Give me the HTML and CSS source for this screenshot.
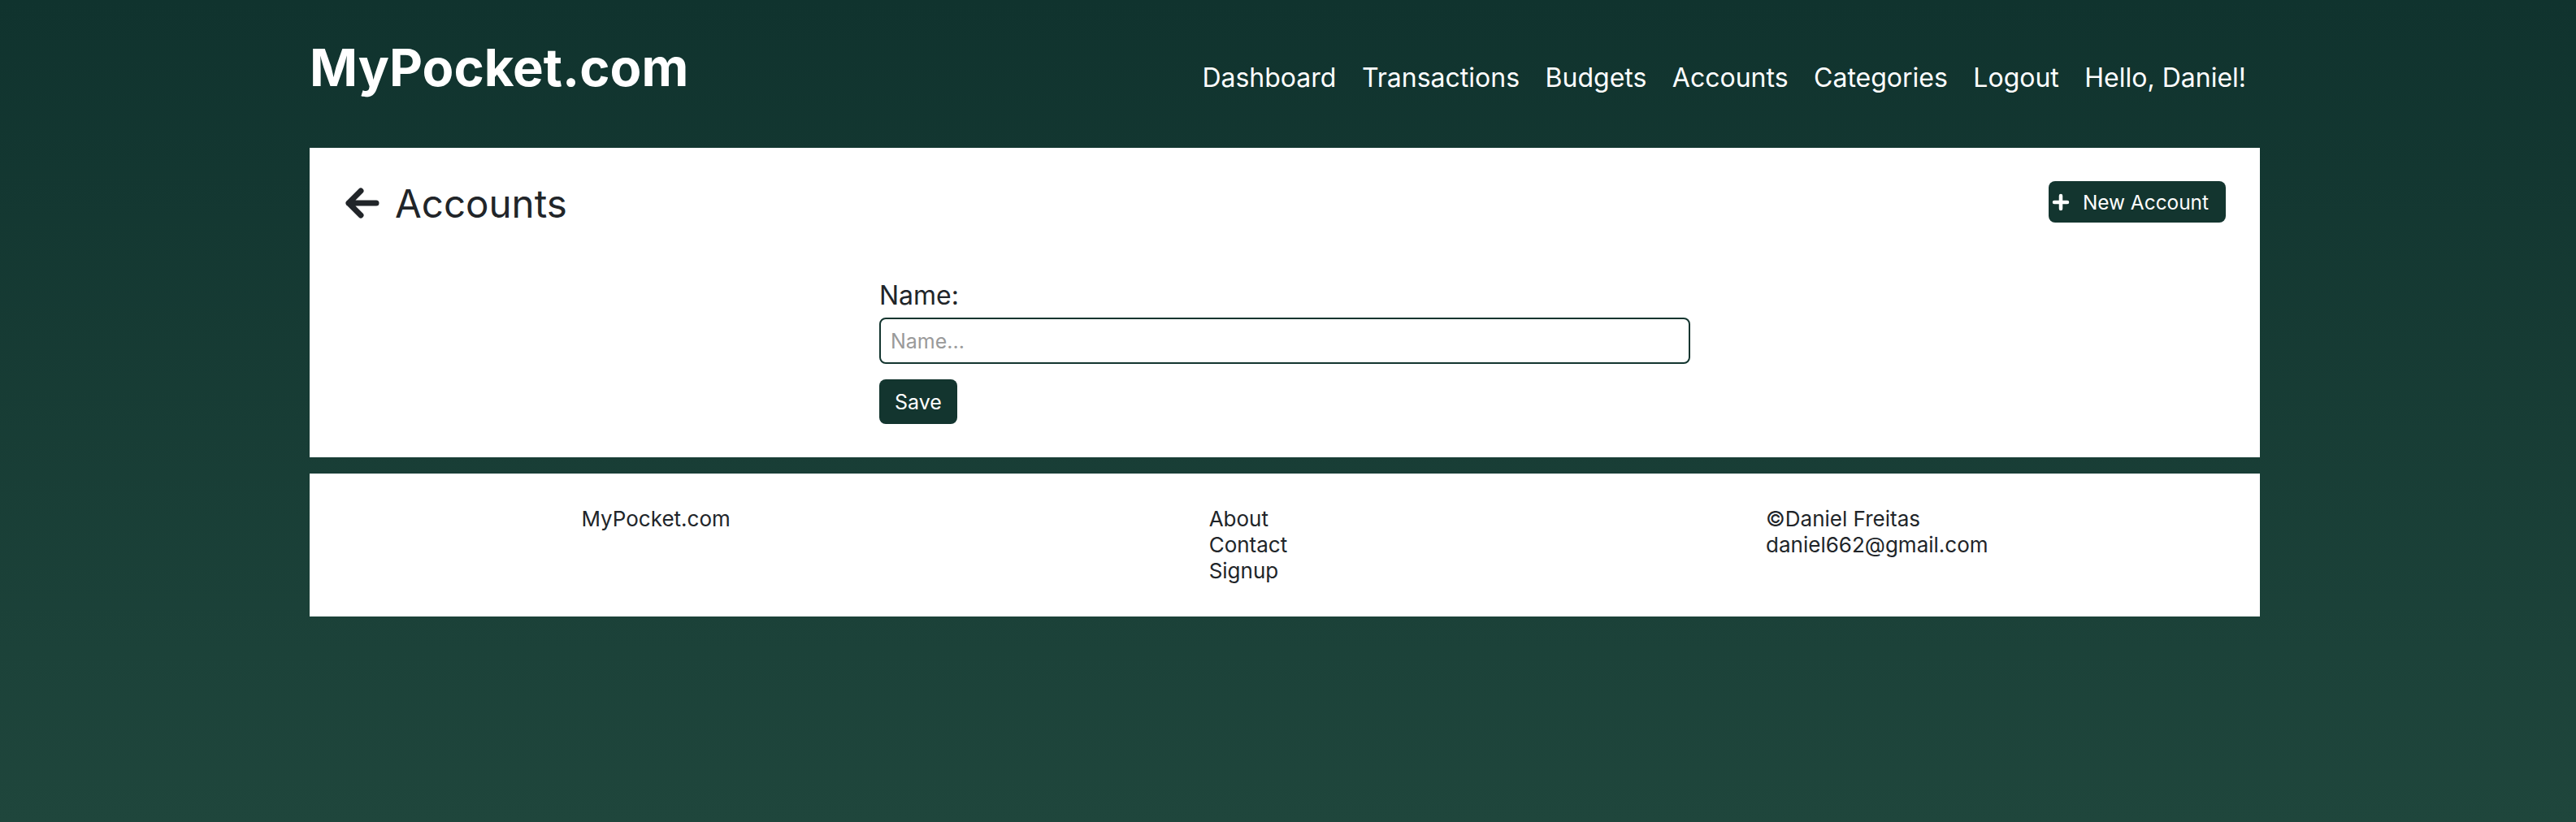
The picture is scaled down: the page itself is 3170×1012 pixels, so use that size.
FILE: index.html
```html
<!DOCTYPE html>
<html lang="en">
<head>
<meta charset="utf-8">
<title>MyPocket.com - Accounts</title>
<link rel="stylesheet" href="styles.css">
</head>
<body>
<div class="wrap">
  <header class="topbar">
    <div class="brand">MyPocket.com</div>
    <nav class="nav">
      <a href="#">Dashboard</a>
      <a href="#">Transactions</a>
      <a href="#">Budgets</a>
      <a href="#">Accounts</a>
      <a href="#">Categories</a>
      <a href="#">Logout</a>
      <span>Hello, Daniel!</span>
    </nav>
  </header>

  <main class="card">
    <div class="card-head">
      <h1 class="title">
        <svg class="back" width="42" height="40" viewBox="0 0 42 40" aria-hidden="true">
          <path d="M19 5 L4 20 L19 35 M4 20 H38" fill="none" stroke="#212529" stroke-width="7" stroke-linecap="round" stroke-linejoin="round"/>
        </svg>
        <span>Accounts</span>
      </h1>
      <button class="btn btn-new">
        <svg class="plus" width="22" height="22" viewBox="0 0 22 22" aria-hidden="true">
          <path d="M11 3 V19 M3 11 H19" fill="none" stroke="#fff" stroke-width="4.5" stroke-linecap="round"/>
        </svg>
        <span>New Account</span>
      </button>
    </div>
    <form class="form">
      <label class="label" for="name">Name:</label>
      <input class="input" id="name" type="text" placeholder="Name...">
      <button class="btn btn-save" type="button">Save</button>
    </form>
  </main>

  <footer class="footer">
    <div class="fcol">MyPocket.com</div>
    <div class="fcol">
      <a href="#">About</a>
      <a href="#">Contact</a>
      <a href="#">Signup</a>
    </div>
    <div class="fcol">
      <span>©Daniel Freitas</span>
      <span>daniel662@gmail.com</span>
    </div>
  </footer>
</div>
</body>
</html>
```
FILE: styles.css
```css
html {
  min-height: 100%;
  background: linear-gradient(180deg, #10332e 0%, #1f463c 100%);
}
body {
  margin: 0;
  padding: 0 8px 0 0;
  min-height: 100vh;
  font-family: Inter, "Liberation Sans", sans-serif;
  color: #212529;
}
.wrap {
  width: 2400px;
  margin: 0 auto;
}
.topbar {
  display: flex;
  align-items: baseline;
  justify-content: space-between;
  height: 182px;
  box-sizing: border-box;
  padding: 45px 0 0;
}
.brand {
  font-size: 63.4px;
  line-height: 1.2;
  font-weight: 700;
  color: #fff;
}
.nav {
  display: flex;
  gap: 31.5px;
  padding-right: 17px;
  font-size: 32px;
  line-height: 1.2;
  position: relative;
  top: 1px;
}
.nav a, .nav span {
  color: #fff;
  text-decoration: none;
}
.card {
  background: #fff;
  padding: 40px 42px 41px 44px;
}
.card-head {
  display: flex;
  align-items: center;
  justify-content: space-between;
}
.title {
  margin: 0;
  display: flex;
  align-items: center;
  gap: 19px;
  font-size: 47.5px;
  line-height: 1.2;
  font-weight: 400;
  color: #212529;
}
.back {
  display: block;
  margin-top: -2px;
}
.btn {
  font-family: Inter, "Liberation Sans", sans-serif;
  border: none;
  background: #13352f;
  color: #fff;
  border-radius: 8px;
  cursor: pointer;
}
.btn-new {
  display: flex;
  align-items: center;
  gap: 16px;
  height: 51px;
  padding: 0 21px 0 4px;
  font-size: 24.4px;
  margin-top: -4px;
}
.plus {
  display: block;
}
.form {
  width: 1000px;
  margin: 66px auto 0;
  display: flex;
  flex-direction: column;
  align-items: flex-start;
}
.label {
  font-size: 32px;
  line-height: 1.2;
  margin-bottom: 8px;
}
.input {
  box-sizing: border-box;
  width: 998px;
  height: 57px;
  border: 2px solid #13352f;
  border-radius: 8px;
  padding: 0 12px;
  font-family: Inter, "Liberation Sans", sans-serif;
  font-size: 25px;
  color: #212529;
  outline: none;
}
.input::placeholder {
  color: #9a9a9a;
}
.btn-save {
  margin-top: 19px;
  height: 55px;
  padding: 0 19px;
  font-size: 25px;
}
.footer {
  margin-top: 20px;
  background: #fff;
  padding: 40px;
  display: flex;
  justify-content: space-around;
  align-items: flex-start;
  font-size: 26px;
  line-height: 32px;
}
.fcol {
  display: flex;
  flex-direction: column;
}
.fcol a, .fcol span {
  color: #212529;
  text-decoration: none;
}
```
